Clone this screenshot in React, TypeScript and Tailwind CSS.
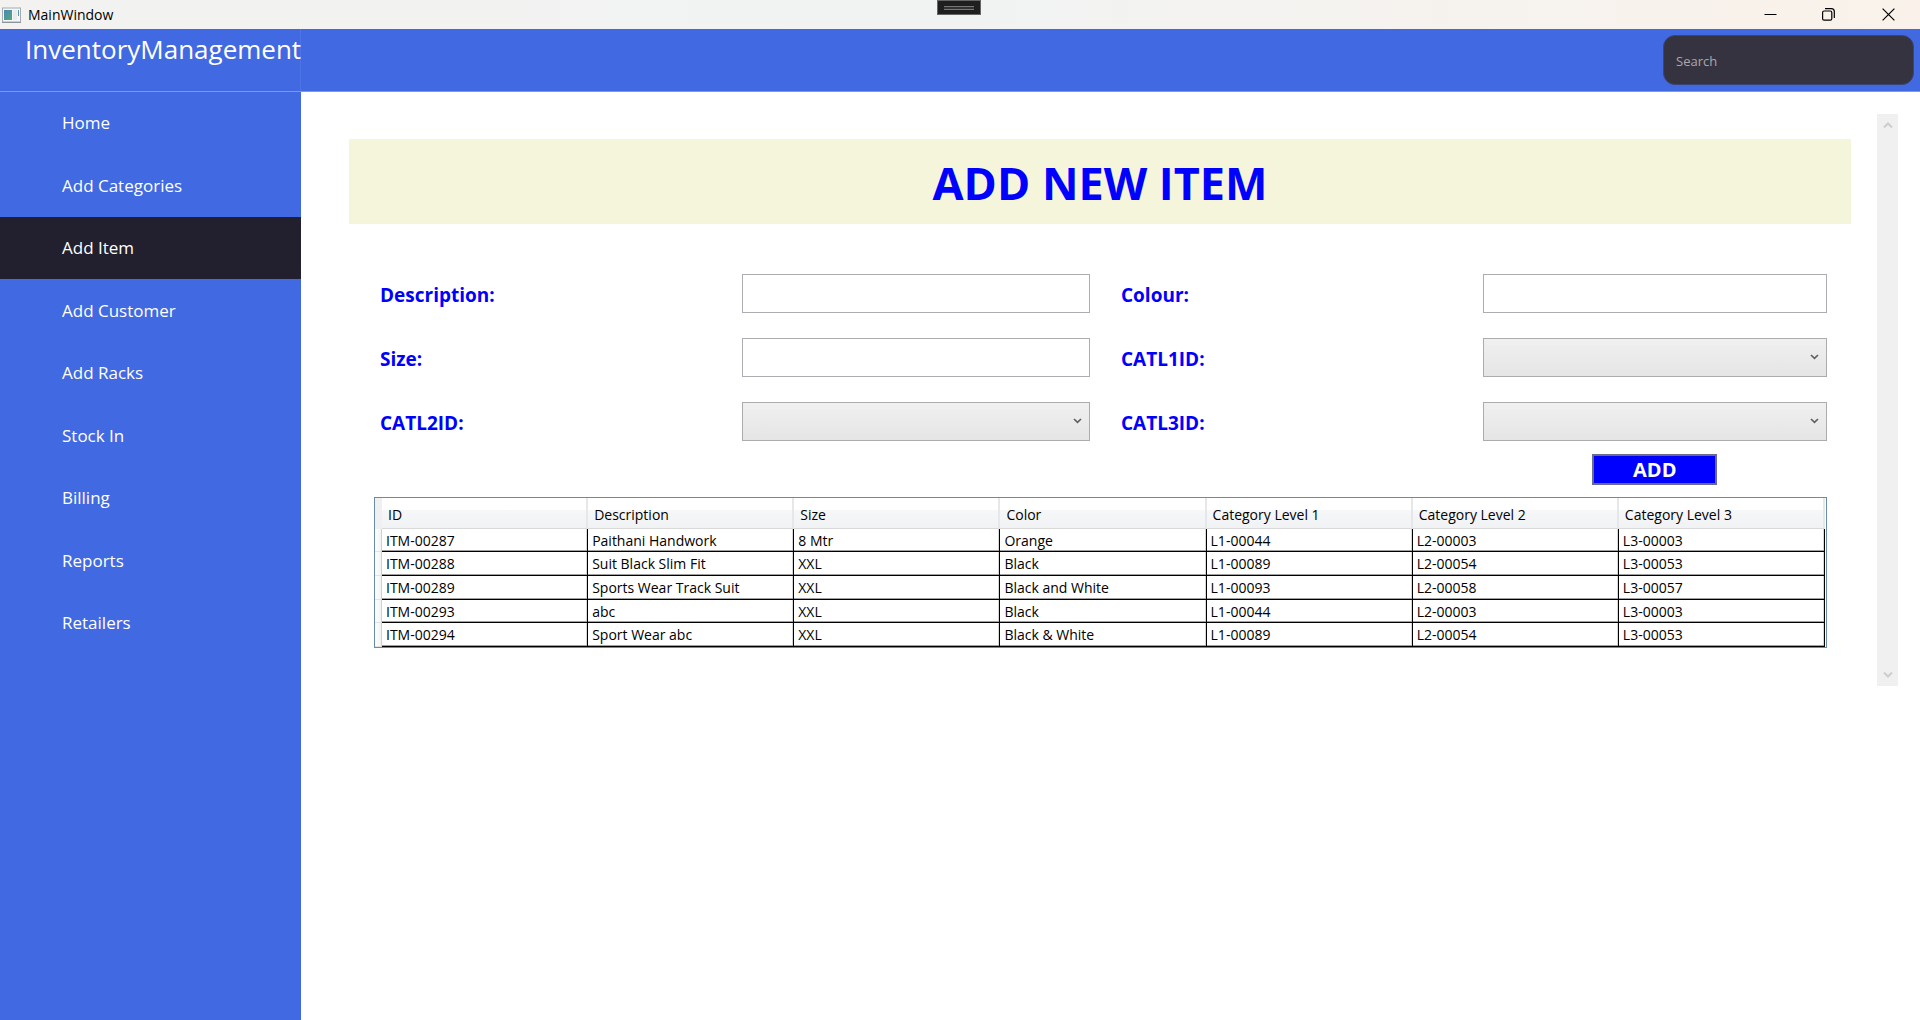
import { useState } from "react";
import type { ReactNode } from "react";

const NAV = [
  "Home",
  "Add Categories",
  "Add Item",
  "Add Customer",
  "Add Racks",
  "Stock In",
  "Billing",
  "Reports",
  "Retailers",
];

const COLUMNS = [
  "ID",
  "Description",
  "Size",
  "Color",
  "Category Level 1",
  "Category Level 2",
  "Category Level 3",
];

const ITEMS = [
  ["ITM-00287", "Paithani Handwork", "8 Mtr", "Orange", "L1-00044", "L2-00003", "L3-00003"],
  ["ITM-00288", "Suit Black Slim Fit", "XXL", "Black", "L1-00089", "L2-00054", "L3-00053"],
  ["ITM-00289", "Sports Wear Track Suit", "XXL", "Black and White", "L1-00093", "L2-00058", "L3-00057"],
  ["ITM-00293", "abc", "XXL", "Black", "L1-00044", "L2-00003", "L3-00003"],
  ["ITM-00294", "Sport Wear abc", "XXL", "Black & White", "L1-00089", "L2-00054", "L3-00053"],
];

function AppIcon() {
  return (
    <svg width="19" height="16" viewBox="0 0 19 16" aria-hidden="true">
      <defs>
        <linearGradient id="pane" x1="0" y1="0" x2="1" y2="1">
          <stop offset="0" stopColor="#4a86b8" />
          <stop offset="1" stopColor="#55a878" />
        </linearGradient>
      </defs>
      <rect x="0.5" y="1" width="18" height="14" fill="#f4f6f7" stroke="#a4abb3" />
      <path d="M0 15.5h19" stroke="#8d949c" />
      <rect x="2" y="3" width="8" height="10" fill="url(#pane)" />
      <rect x="11" y="3" width="4" height="10" fill="#e9ecee" />
      <rect x="16" y="3" width="1" height="6" fill="#5a9aa8" />
    </svg>
  );
}

function TitleBar() {
  return (
    <div className="relative flex h-[29px] items-center justify-between bg-linear-to-r from-[#f3f2f0] via-[#f1f3f3] to-[#faf2ea] pl-[2px]">
      <div className="flex items-center gap-[7px] text-[14px] text-black">
        <AppIcon />
        <span>MainWindow</span>
      </div>
      <div className="absolute top-0 left-1/2 flex h-[15px] w-11 -translate-x-[23px] items-center justify-center border border-[#666] bg-[#1f1f1f]">
        <span className="h-1 w-[30px] border-y border-[#777] bg-[#333]" />
      </div>
      <div className="flex h-full text-black">
        <button type="button" aria-label="Minimize" className="flex w-[58px] items-center justify-center">
          <svg width="13" height="13" viewBox="0 0 13 13" fill="none" stroke="currentColor">
            <path d="M0.5 6.5h12" />
          </svg>
        </button>
        <button type="button" aria-label="Restore" className="flex w-[58px] items-center justify-center">
          <svg width="13" height="13" viewBox="0 0 13 13" fill="none" stroke="currentColor" strokeWidth="1.2">
            <rect x="0.6" y="3" width="9.2" height="9.2" rx="1.5" />
            <path d="M3 0.7h6.4a2.9 2.9 0 0 1 2.9 2.9V10" />
          </svg>
        </button>
        <button type="button" aria-label="Close" className="flex w-[63px] items-center justify-center">
          <svg width="13" height="13" viewBox="0 0 13 13" fill="none" stroke="currentColor" strokeWidth="1.2">
            <path d="M0.6 0.6l11.8 11.8M12.4 0.6L0.6 12.4" />
          </svg>
        </button>
      </div>
    </div>
  );
}

function Header() {
  return (
    <header className="flex h-[63px] justify-between border-b border-[#7c98ec] bg-[#4169e1]">
      <div className="w-[301px] shrink-0 border-r border-[#4d74e6] pl-[25px] text-[26px] leading-[41px] whitespace-nowrap text-white">
        InventoryManagement
      </div>
      <input
        type="text"
        aria-label="Search"
        placeholder="Search"
        className="mt-1.5 mr-1.5 h-[50px] w-[251px] rounded-xl border border-[#3b4478] bg-[#363340] px-3 pt-0.5 text-[13px] text-white outline-none placeholder:text-[#a9a9a9]"
      />
    </header>
  );
}

function Sidebar({ active, onSelect }: { active: string; onSelect: (name: string) => void }) {
  return (
    <nav className="w-[301px] shrink-0 bg-[#4169e1]">
      <div className="grid h-[562px] auto-rows-fr">
        {NAV.map((name) => (
          <button
            key={name}
            type="button"
            onClick={() => onSelect(name)}
            className={
              name === active
                ? "bg-[#22202f] pl-[62px] text-left text-[17px] text-white"
                : "pl-[62px] text-left text-[17px] text-white"
            }
          >
            {name}
          </button>
        ))}
      </div>
    </nav>
  );
}

function Label({ htmlFor, children }: { htmlFor: string; children: ReactNode }) {
  return (
    <label htmlFor={htmlFor} className="pt-1 pl-[19px] text-[19px] font-bold text-[#0000ff]">
      {children}
    </label>
  );
}

function TextField({ id }: { id: string }) {
  return (
    <input
      id={id}
      type="text"
      className="block h-[39px] w-full border border-[#abadb3] bg-white px-2 text-[14px] text-black outline-none"
    />
  );
}

function Select({ id }: { id: string }) {
  return (
    <div className="relative">
      <select
        id={id}
        className="block h-[39px] w-full appearance-none border border-[#acacac] bg-linear-to-b from-[#f0f0f0] to-[#e5e5e5] px-2 text-[14px] text-black outline-none"
      >
        <option value="" />
      </select>
      <svg
        className="pointer-events-none absolute top-4 right-2"
        width="9"
        height="6"
        viewBox="0 0 9 6"
        fill="none"
        stroke="#606060"
        strokeWidth="1.7"
        aria-hidden="true"
      >
        <path d="M1 1l3.5 3.3L8 1" />
      </svg>
    </div>
  );
}

function ItemForm() {
  return (
    <form
      className="mt-[37px] mr-2 ml-3 grid auto-rows-[64px] grid-cols-4 items-center"
      onSubmit={(e) => e.preventDefault()}
    >
      <Label htmlFor="description">Description:</Label>
      <div className="mr-3 ml-[10px]"><TextField id="description" /></div>
      <Label htmlFor="colour">Colour:</Label>
      <div className="mr-4 ml-[10px]"><TextField id="colour" /></div>

      <Label htmlFor="size">Size:</Label>
      <div className="mr-3 ml-[10px]"><TextField id="size" /></div>
      <Label htmlFor="catl1">CATL1ID:</Label>
      <div className="mr-4 ml-[10px]"><Select id="catl1" /></div>

      <Label htmlFor="catl2">CATL2ID:</Label>
      <div className="mr-3 ml-[10px]"><Select id="catl2" /></div>
      <Label htmlFor="catl3">CATL3ID:</Label>
      <div className="mr-4 ml-[10px]"><Select id="catl3" /></div>

      <button
        type="submit"
        className="col-start-4 mt-px mr-1.5 h-[31px] w-[125px] self-start justify-self-center border-2 border-[#6b6b8c] bg-[#0000ff] pt-px text-[20px] leading-[26px] font-bold text-white"
      >
        ADD
      </button>
    </form>
  );
}

function ItemTable() {
  return (
    <div className="mr-6 ml-[25px] border border-[#688caf] bg-white pr-px">
      <table className="w-full table-fixed border-separate border-spacing-0 text-left text-[14px] leading-5 text-black">
        <thead>
          <tr className="h-[31px]">
            <td className="w-[7px] bg-[#f0f0f0] p-0" />
            {COLUMNS.map((name) => (
              <th
                key={name}
                scope="col"
                className="border-r-2 border-b border-r-[#e6e7e9] border-b-[#d9d9d9] bg-linear-to-b from-white from-40% via-[#f6f7f8] via-41% to-[#f1f2f4] p-0 pt-1 pl-1.5 font-normal"
              >
                {name}
              </th>
            ))}
          </tr>
        </thead>
        <tbody>
          {ITEMS.map((row) => (
            <tr key={row[0]} className="h-6 nth-[3n+1]:h-[23px]">
              <td className="border-r border-b border-r-[#d0d0d0] border-b-[#e2e2e2] bg-linear-to-r from-white to-[#f3f3f3] p-0" />
              {row.map((value, i) => (
                <td
                  key={i}
                  className="border-r border-b border-black p-0 pt-px pl-1 shadow-[inset_0_-1px_0_#a0a0a0,inset_-1px_0_0_#d8d8d8]"
                >
                  {value}
                </td>
              ))}
            </tr>
          ))}
        </tbody>
      </table>
    </div>
  );
}

function ScrollTrack() {
  return (
    <div className="flex w-[21px] shrink-0 flex-col items-center justify-between bg-[#f0f0f0] py-2" aria-hidden="true">
      <svg width="10" height="7" viewBox="0 0 10 7" fill="none" stroke="#cdcdcd" strokeWidth="2">
        <path d="M1 5.5l4-4 4 4" />
      </svg>
      <svg width="10" height="7" viewBox="0 0 10 7" fill="none" stroke="#cdcdcd" strokeWidth="2">
        <path d="M1 1.5l4 4 4-4" />
      </svg>
    </div>
  );
}

export default function App() {
  const [active, setActive] = useState("Add Item");
  return (
    <div className="flex min-h-screen flex-col bg-white font-['Open_Sans','Noto_Sans',sans-serif]">
      <TitleBar />
      <Header />
      <div className="flex flex-1">
        <Sidebar active={active} onSelect={setActive} />
        <main className="flex flex-1 items-start pt-[22px] pr-[22px] pl-12">
          <div className="flex flex-1">
            <div className="min-h-[572px] flex-1 pt-[25px] pr-[26px]">
              <h1 className="flex h-[85px] items-center justify-center bg-[#f5f5dc] pt-0.5 text-[45px] font-bold text-[#0000ff]">
                ADD NEW ITEM
              </h1>
              <ItemForm />
              <div className="-mt-5">
                <ItemTable />
              </div>
            </div>
            <ScrollTrack />
          </div>
        </main>
      </div>
    </div>
  );
}
